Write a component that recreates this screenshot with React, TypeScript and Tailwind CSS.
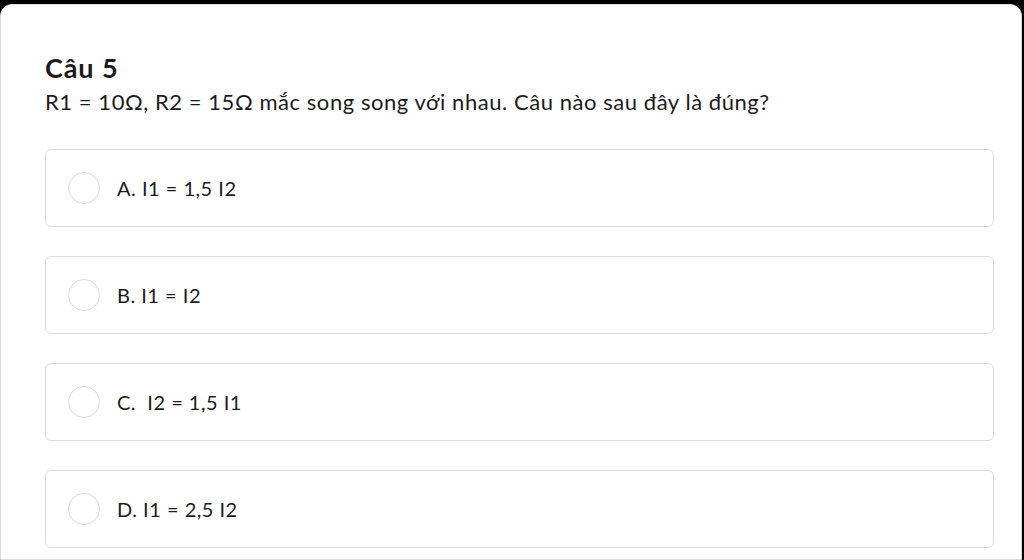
const options = [
  { id: "A", label: "A. I1 = 1,5 I2" },
  { id: "B", label: "B. I1 = I2" },
  { id: "C", label: "C.  I2 = 1,5 I1" },
  { id: "D", label: "D. I1 = 2,5 I2" },
];

export default function App() {
  return (
    <div className="h-[560px] w-[1024px] overflow-hidden bg-black pt-1 font-['Lato',sans-serif] text-[#1c1c1c]">
      <div className="h-full w-[1022px] rounded-t-[12px] border border-[#dcdcdc] bg-white pl-[44px] pr-[27px] pt-[46px]">
        <h2 className="text-[27px] font-bold leading-[34px] tracking-[0.9px]">Câu 5</h2>
        <p className="mt-[2px] whitespace-pre text-[22px] leading-[30px] tracking-[0.55px]">
          R1 = 10Ω, R2 = 15Ω mắc song song với nhau. Câu nào sau đây là đúng?
        </p>

        <div className="mt-[32px] flex flex-col gap-[29px]">
          {options.map((opt) => (
            <label
              key={opt.id}
              className="flex h-[78px] cursor-pointer items-center rounded-md border border-[#dddddd] pl-[22px]"
            >
              <span className="h-[32px] w-[32px] shrink-0 rounded-full border border-[#dcdcdc]" />
              <span className="ml-[17px] whitespace-pre text-[20px] tracking-[0.5px]">{opt.label}</span>
            </label>
          ))}
        </div>
      </div>
    </div>
  );
}
